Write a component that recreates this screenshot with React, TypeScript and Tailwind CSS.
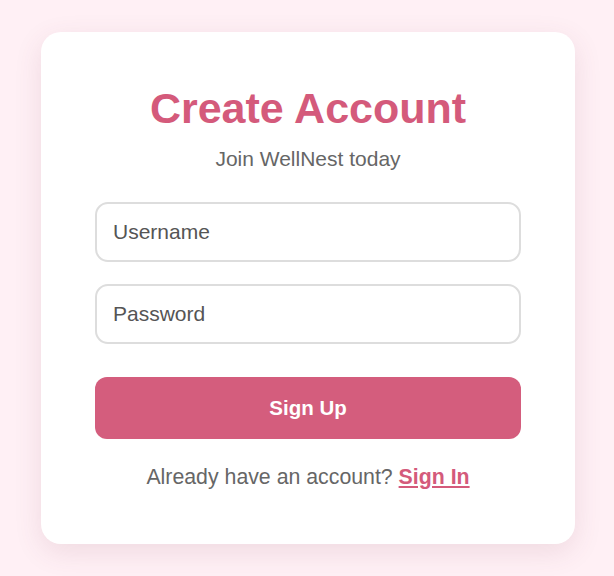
import { useState } from "react";

const font = { fontFamily: '"Liberation Sans", Arial, sans-serif' };

function SignUpCard() {
  const [username, setUsername] = useState("");
  const [password, setPassword] = useState("");

  return (
    <div className="flex flex-col w-[534px] h-[512px] rounded-[20px] bg-white px-[54px] pt-[52px] shadow-[0_8px_28px_rgba(120,60,80,0.12)]">
      <h1 className="text-center text-[43px] leading-[48px] font-bold text-[#d45a7b]">
        Create Account
      </h1>
      <p className="mt-[15px] text-center text-[21px] leading-[24px] text-[#666666]">
        Join WellNest today
      </p>
      <form
        className="flex flex-col mt-[31px]"
        onSubmit={(e) => e.preventDefault()}
      >
        <input
          type="text"
          placeholder="Username"
          value={username}
          onChange={(e) => setUsername(e.target.value)}
          className="h-[60px] w-full rounded-[13px] border-2 border-[#dddddd] bg-white px-[16px] text-[21px] text-[#333] outline-none placeholder:text-[#555555]"
          style={font}
        />
        <input
          type="password"
          placeholder="Password"
          value={password}
          onChange={(e) => setPassword(e.target.value)}
          className="mt-[22px] h-[60px] w-full rounded-[13px] border-2 border-[#dddddd] bg-white px-[16px] text-[21px] text-[#333] outline-none placeholder:text-[#555555]"
          style={font}
        />
        <button
          type="submit"
          className="mt-[33px] h-[62px] w-full rounded-[12px] bg-[#d45d7d] text-[20.5px] font-bold text-white"
          style={font}
        >
          Sign Up
        </button>
      </form>
      <p className="mt-[26px] text-center text-[21.3px] leading-[24px] text-[#666666]">
        Already have an account?{" "}
        <a href="#" className="font-bold text-[#d45a7b] underline">
          Sign In
        </a>
      </p>
    </div>
  );
}

export default function App() {
  return (
    <div
      className="flex min-h-screen w-full items-center justify-center bg-[#fff0f5] pl-[2px]"
      style={font}
    >
      <SignUpCard />
    </div>
  );
}
